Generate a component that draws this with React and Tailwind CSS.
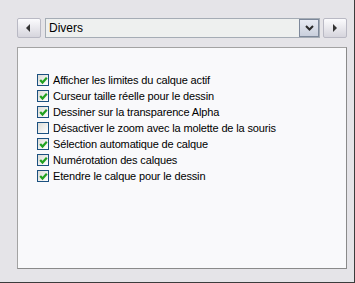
import React from "react";

const items = [
  { label: "Afficher les limites du calque actif", checked: true },
  { label: "Curseur taille réelle pour le dessin", checked: true },
  { label: "Dessiner sur la transparence Alpha", checked: true },
  { label: "Désactiver le zoom avec la molette de la souris", checked: false },
  { label: "Sélection automatique de calque", checked: true },
  { label: "Numérotation des calques", checked: true },
  { label: "Etendre le calque pour le dessin", checked: true },
];

function Check({ checked }) {
  return (
    <span className="w-[12px] h-[12px] border border-[#1c5180] bg-gradient-to-br from-[#dcdcd7] to-[#ffffff] flex items-center justify-center shrink-0">
      {checked && (
        <svg width="9" height="9" viewBox="0 0 9 9">
          <path d="M1.2 4 L3.5 6.5 L7.8 1.8" stroke="#21a121" strokeWidth="2.2" fill="none" />
        </svg>
      )}
    </span>
  );
}

function ArrowButton({ dir }) {
  return (
    <button className="w-[24px] h-[20px] border border-[#b9b9c4] rounded-[2px] bg-gradient-to-b from-[#fbfbfd] to-[#d6d5dd] flex items-center justify-center">
      <svg width="6" height="8" viewBox="0 0 6 8">
        {dir === "left" ? (
          <path d="M4 0 L0 4 L4 8 Z" fill="#333" />
        ) : (
          <path d="M1 0 L5 4 L1 8 Z" fill="#333" />
        )}
      </svg>
    </button>
  );
}

export default function App() {
  return (
    <div
      className="w-[355px] h-[283px] bg-[#e5e4e8] border-r border-b border-[#3c3c3c] pl-[17px] pt-[18px] text-[11px] text-black"
      style={{ fontFamily: "Tahoma, 'Liberation Sans', sans-serif" }}
    >
      <div className="flex items-center">
        <ArrowButton dir="left" />
        <div className="ml-[4px] w-[275px] h-[20px] border border-[#a5acb5] bg-[#eef0ef] flex items-center">
          <span className="flex-1 pl-[3px] text-[12px] leading-none">Divers</span>
          <span className="w-[20px] h-[18px] border border-[#7d889a] bg-gradient-to-b from-[#e8ebf3] to-[#c9cfdc] flex items-center justify-center">
            <svg width="9" height="6" viewBox="0 0 9 6">
              <path d="M1 1 L4.5 4.5 L8 1" stroke="#2b2b2b" strokeWidth="2" fill="none" />
            </svg>
          </span>
        </div>
        <div className="ml-[3px]">
          <ArrowButton dir="right" />
        </div>
      </div>

      <div className="mt-[9px] w-[330px] h-[222px] bg-[#f9f9fb] border border-[#a3a3a3] border-b-[#8a8a8a] border-r-[#8a8a8a] pl-[19px] pt-[24px]">
        {items.map((it) => (
          <div key={it.label} className="h-[16px] flex items-center gap-[4px]">
            <Check checked={it.checked} />
            <span className="leading-none whitespace-nowrap tracking-[-0.15px]">{it.label}</span>
          </div>
        ))}
      </div>
    </div>
  );
}
